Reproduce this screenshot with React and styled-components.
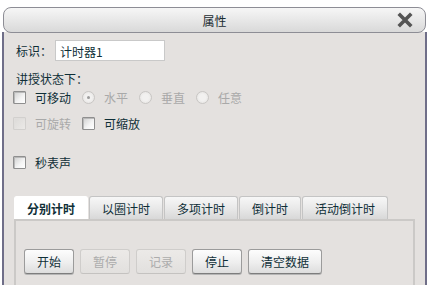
import React from "react";
import styled, { createGlobalStyle } from "styled-components";

const Global = createGlobalStyle`
  html, body { margin: 0; padding: 0; background: #ffffff; }
  body { font-family: "Noto Sans CJK SC", "Noto Sans", sans-serif; font-size: 12px; color: #0f2f37; }
  * { box-sizing: border-box; }
`;

const Window = styled.div`
  margin: 7px 0 0 2px;
  width: 425px;
  height: 278px;
  display: flex;
  flex-direction: column;
`;

const TitleBar = styled.div`
  position: relative;
  height: 26px;
  margin: 0 1px;
  border: 1px solid #8d8d95;
  border-radius: 8px;
  background: linear-gradient(#f6f6f6, #e6e6e6 55%, #d9d9d9);
  display: flex;
  align-items: center;
  justify-content: center;
  font-size: 12px;
  color: #1b2b30;
  z-index: 1;
`;

const CloseBtn = styled.div`
  position: absolute;
  right: 12px;
  top: 4px;
  width: 16px;
  height: 16px;
  display: flex;
`;

const Body = styled.div`
  flex: 1;
  margin-top: -1px;
  background: #e4e1df;
  border-left: 2px solid #6f6e88;
  border-right: 2px solid #6f6e88;
  padding: 0 0 0 9px;
  display: flex;
  flex-direction: column;
  overflow: hidden;
`;

const IdRow = styled.div`
  margin-top: 8px;
  height: 21px;
  display: flex;
  align-items: center;
`;

const Label = styled.span`
  margin-left: 3px;
  width: 39px;
  white-space: nowrap;
`;

const TextInput = styled.div`
  width: 110px;
  height: 21px;
  background: #ffffff;
  border: 1px solid #c9c9c9;
  padding: 3px 0 0 4px;
  line-height: 15px;
`;

const Section = styled.div`
  margin-top: 10px;
  height: 16px;
  line-height: 16px;
  padding-left: 3px;
`;

const Row = styled.div`
  margin-top: ${(p) => p.$mt || 0}px;
  height: 20px;
  display: flex;
  align-items: center;
`;

const Item = styled.div`
  display: flex;
  align-items: center;
  margin-right: ${(p) => p.$mr || 11}px;
  color: ${(p) => (p.$disabled ? "#a9a9a9" : "#0f2f37")};
  white-space: nowrap;
`;

const Box = styled.span`
  width: 13px;
  height: 13px;
  margin-right: 9px;
  border: 1px solid ${(p) => (p.$disabled ? "#d2d0ce" : "#8f8f8f")};
  border-radius: 1px;
  background: ${(p) =>
    p.$disabled
      ? "linear-gradient(135deg, #dcdad8, #ebe9e7)"
      : "linear-gradient(135deg, #cfcfcf, #f4f4f4 60%, #ffffff)"};
  box-shadow: inset 1px 1px 0 ${(p) => (p.$disabled ? "#e0dedc" : "#b9b9b9")};
`;

const Radio = styled.span`
  width: 13px;
  height: 13px;
  margin-right: 9px;
  border-radius: 50%;
  border: 1px solid #c8c6c4;
  background: radial-gradient(circle, #f2f1f0 40%, #e2e0de);
  display: flex;
  align-items: center;
  justify-content: center;
  &::after {
    content: "";
    width: 3px;
    height: 3px;
    border-radius: 50%;
    background: ${(p) => (p.$checked ? "#9c9c9c" : "transparent")};
  }
`;

const Tabs = styled.div`
  margin-top: 24px;
  margin-left: 1px;
  display: flex;
  gap: 1px;
  height: 23px;
`;

const Tab = styled.div`
  width: ${(p) => p.$w}px;
  height: 23px;
  display: flex;
  align-items: center;
  justify-content: center;
  border: 1px solid ${(p) => (p.$active ? "#ffffff" : "#c4c4c4")};
  border-bottom: none;
  border-radius: 3px 3px 0 0;
  background: ${(p) => (p.$active ? "#ffffff" : "linear-gradient(#f7f7f7, #e9e9e9 50%, #d8d8d8)")};
  font-weight: ${(p) => (p.$active ? 700 : 400)};
  color: #0f2f37;
  position: relative;
  z-index: ${(p) => (p.$active ? 2 : 1)};
`;

const Panel = styled.div`
  margin-left: 1px;
  width: 401px;
  flex: 1;
  border: 2px solid #cbc9c7;
  border-bottom: none;
  padding: 28px 0 0 8px;
  display: flex;
  gap: 6px;
  align-items: flex-start;
`;

const Button = styled.div`
  width: ${(p) => p.$w || 50}px;
  height: 25px;
  display: flex;
  align-items: center;
  justify-content: center;
  border: 1px solid ${(p) => (p.$disabled ? "#cfcdcb" : "#9b9b9b")};
  border-bottom-color: ${(p) => (p.$disabled ? "#c4c2c0" : "#7d7d7d")};
  border-radius: 3px;
  background: ${(p) =>
    p.$disabled ? "linear-gradient(#eceae8, #e2e0de)" : "linear-gradient(#fdfdfd, #eeeeee 55%, #dddddd)"};
  box-shadow: ${(p) => (p.$disabled ? "none" : "0 1px 0 #b5b5b5")};
  color: ${(p) => (p.$disabled ? "#acacac" : "#0f2f37")};
`;

const CloseIcon = () => (
  <svg width="16" height="16" viewBox="0 0 16 16">
    <path d="M3 3 L13 13 M13 3 L3 13" stroke="#555555" strokeWidth="3.6" strokeLinecap="square" />
  </svg>
);

const tabs = [
  { t: "分别计时", w: 74, active: true },
  { t: "以圈计时", w: 74 },
  { t: "多项计时", w: 74 },
  { t: "倒计时", w: 62 },
  { t: "活动倒计时", w: 86 },
];

const buttons = [
  { t: "开始", w: 50 },
  { t: "暂停", w: 50, disabled: true },
  { t: "记录", w: 50, disabled: true },
  { t: "停止", w: 50 },
  { t: "清空数据", w: 74 },
];

export default function App() {
  return (
    <>
      <Global />
      <Window>
        <TitleBar>
          属性
          <CloseBtn>
            <CloseIcon />
          </CloseBtn>
        </TitleBar>
        <Body>
          <IdRow>
            <Label>标识：</Label>
            <TextInput>计时器1</TextInput>
          </IdRow>
          <Section>讲授状态下：</Section>
          <Row>
            <Item>
              <Box />
              可移动
            </Item>
            <Item $disabled>
              <Radio $checked />
              水平
            </Item>
            <Item $disabled>
              <Radio />
              垂直
            </Item>
            <Item $disabled>
              <Radio />
              任意
            </Item>
          </Row>
          <Row $mt={6}>
            <Item $disabled>
              <Box $disabled />
              可旋转
            </Item>
            <Item>
              <Box />
              可缩放
            </Item>
          </Row>
          <Row $mt={19}>
            <Item>
              <Box />
              秒表声
            </Item>
          </Row>
          <Tabs>
            {tabs.map((x) => (
              <Tab key={x.t} $w={x.w} $active={x.active}>
                {x.t}
              </Tab>
            ))}
          </Tabs>
          <Panel>
            {buttons.map((b) => (
              <Button key={b.t} $w={b.w} $disabled={b.disabled}>
                {b.t}
              </Button>
            ))}
          </Panel>
        </Body>
      </Window>
    </>
  );
}
